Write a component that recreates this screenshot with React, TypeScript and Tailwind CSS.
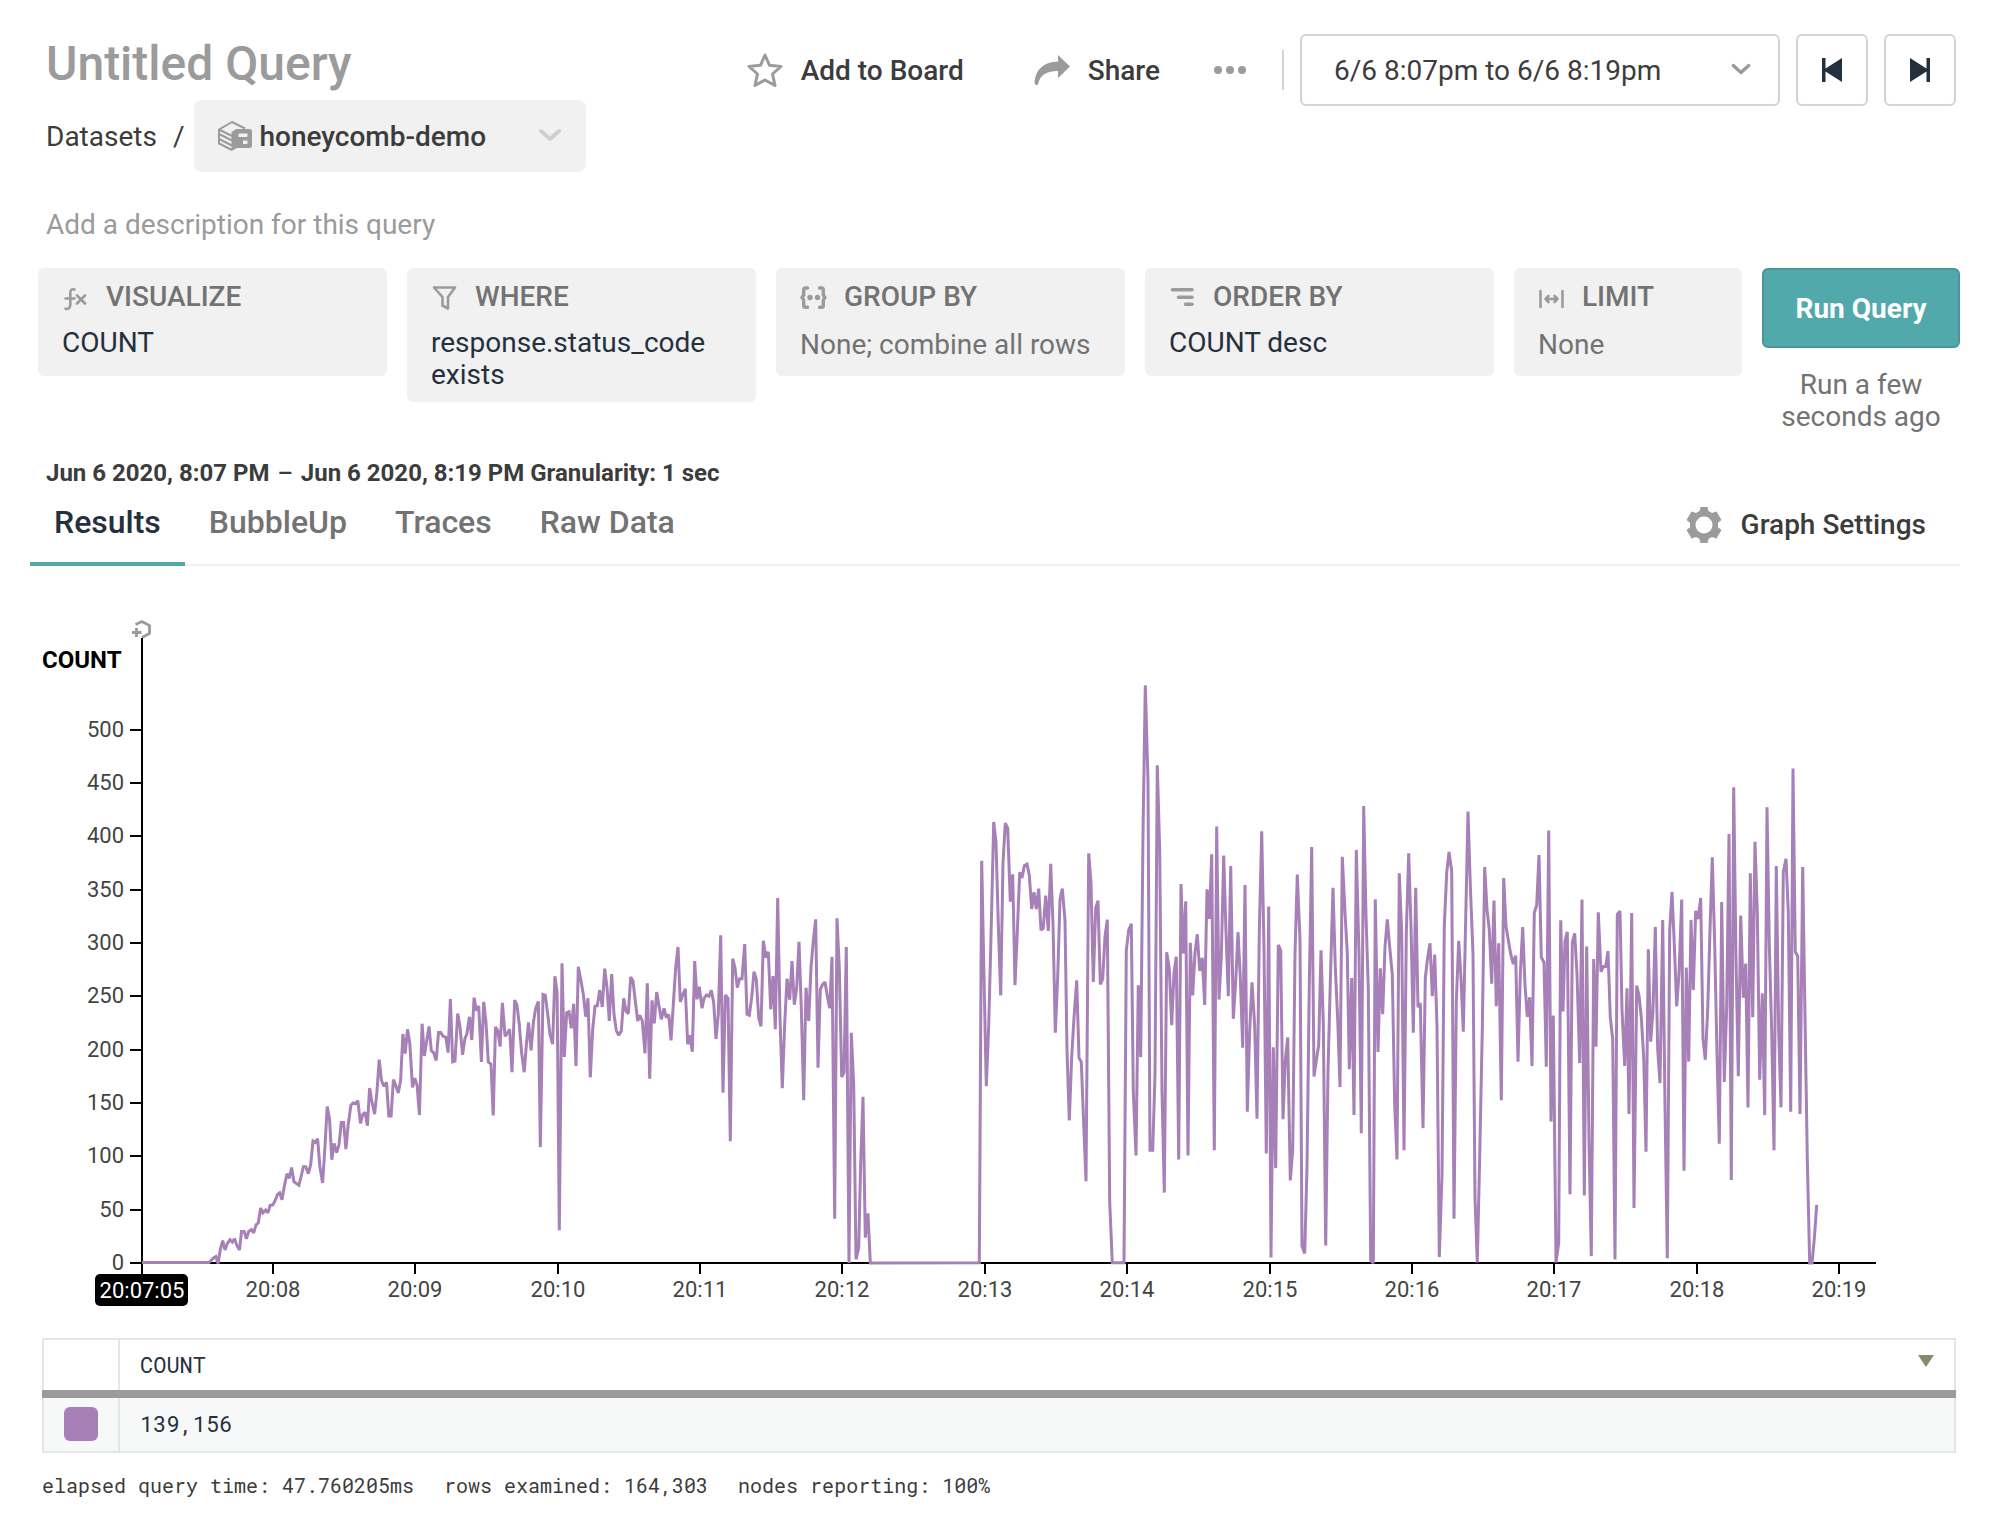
import type { ReactNode } from "react";

type Segment = { x: number; y: number; sx: number; sy: number; points: string };

/* Samples of the COUNT series, one per second. Each segment has its own origin and units per pixel. */
const SEGMENTS: Segment[] = [
  {
    x: 0,
    y: 600,
    sx: 2.6133,
    sy: 2.1479,
    points:
      "371,1421 546,1421 558,1411 564,1408 570,1423 576,1392 582,1374 588,1394 594,1380 601,1372 607,1377 613,1370 619,1384 626,1394 631,1354 638,1354 644,1370 650,1354 657,1350 663,1357 669,1340 675,1336 681,1304 687,1314 694,1308 700,1314 706,1298 713,1297 719,1288 725,1275 731,1271 737,1286 743,1257 750,1230 756,1240 762,1217 768,1247 781,1255 787,1235 793,1215 799,1215 806,1230 812,1210 818,1160 824,1163 830,1155 836,1215 843,1250 849,1175 855,1086 861,1112 867,1200 873,1165 880,1185 886,1168 892,1120 898,1120 904,1177 910,1125 917,1083 923,1078 929,1080 935,1073 942,1122 948,1103 954,1098 960,1127 966,1046 972,1075 979,1102 985,1055 991,985 997,1030 1003,1042 1010,1034 1016,1106 1022,1106 1028,1028 1034,1040 1041,1057 1047,1030 1053,930 1059,972 1065,920 1071,950 1078,1045 1084,1025 1090,1040 1096,1104 1103,908 1109,977 1115,945 1121,914 1127,966 1133,970 1140,987 1146,927 1152,927 1158,935 1165,937 1171,970 1177,855 1183,990 1189,988 1196,886 1202,915 1209,975 1215,940 1220,930 1227,893 1233,943 1239,852 1245,880 1251,870 1258,990 1264,861 1270,905 1276,990 1283,995 1289,1105 1295,915 1301,923 1307,957 1313,863 1320,935 1326,928 1332,920 1338,1012 1345,857 1351,868 1357,910 1363,970 1370,1012 1376,950 1381,905 1388,965 1394,905 1400,875 1407,860 1412,1173 1419,845 1425,847 1431,885 1437,930 1444,952 1450,806 1456,840",
  },
  {
    x: 550,
    y: 800,
    sx: 3,
    sy: 3,
    points:
      "28,1288 36,487 43,768 50,635 57,632 64,682 71,608 78,795 85,497 93,540 100,580 107,647 114,592 121,829 128,685 135,616 142,614 149,567 157,618 164,503 171,560 178,660 185,519 192,640 199,688 206,703 214,690 221,592 228,630 235,638 242,528 249,540 256,600 263,660 270,643 277,660 285,757 292,547 299,833 306,598 313,667 320,573 327,615 334,655 342,622 349,650 356,640 363,718 370,610 377,500 384,438 391,603 399,580 406,563 413,730 420,703 427,752 434,480 441,595 448,557 456,622 463,590 470,582 477,586 484,568 491,605 498,714 505,640 512,403 519,875 526,582 534,592 541,1021 548,473 555,500 562,560 569,533 576,533 584,429 591,640 598,643 605,590 612,512 619,535 626,650 633,676 640,419 648,470 655,452 662,625 669,525 676,685 683,291 690,650 697,862 704,670 711,533 719,596 726,480 733,611 740,560 747,422 754,620 761,898 768,560 776,660 783,500 790,420 797,355 804,800 811,565 818,550 825,543 832,585 839,622 846,467 854,1253 861,352 868,500 875,828 882,815 889,438 897,1386 904,695 911,850 918,1375 926,1340 932,1085 939,887 946,1310 954,1237 961,1386",
  },
  {
    x: 960,
    y: 670,
    sx: 3,
    sy: 2.45,
    points:
      "58,1450 65,465 72,750 79,1017 86,870 93,650 101,370 108,420 115,620 122,795 129,470 136,373 143,385 151,565 158,498 165,770 172,640 179,493 186,507 193,477 201,473 208,500 215,583 222,542 229,583 236,533 243,635 250,630 257,550 265,637 272,472 279,620 286,886 293,750 300,560 307,533 315,610 321,930 328,1101 335,945 342,850 350,758 357,948 364,958 371,1110 378,1250 386,447 393,520 400,762 407,580 414,563 421,768 428,755 435,650 442,609 449,1300 457,1450 492,1450 499,685 506,635 514,619 520,1030 528,1187 535,770 542,946 549,400 556,35 564,270 570,1174 578,1174 585,990 592,231 599,440 606,1030 613,1278 620,689 628,730 635,868 642,740 649,700 656,1197 663,522 670,692 677,564 684,1187 691,666 698,795 705,690 712,645 719,735 727,703 734,818 741,535 748,607 755,449 763,1174 770,381 777,805 784,700 791,452 798,640 805,797 812,478 820,852 827,760 834,640 841,750 848,923 855,524 862,1080 869,880 876,763 884,870 891,1097 898,640 905,393 912,680 919,1182 926,577 933,1437 940,922 947,1218 955,671",
  },
  {
    x: 1240,
    y: 760,
    sx: 3,
    sy: 2.9037,
    points:
      "122,550 129,1040 136,870 143,803 151,1218 158,1130 165,560 172,330 180,520 186,1408 194,1430 201,1180 208,650 215,250 222,916 229,870 236,825 243,550 250,760 257,1407 264,900 272,600 279,368 286,600 293,750 300,947 307,278 315,440 322,560 328,895 335,630 342,1028 349,258 357,560 364,1081 371,131 378,450 385,660 392,1450 400,1458 406,402 414,845 421,602 428,735 435,540 442,460 449,540 457,620 464,1000 471,1157 478,326 485,500 492,1130 499,500 506,268 513,480 520,789 527,368 534,715 541,703 549,1066 556,630 563,570 570,529 577,683 584,562 591,770 598,1440 606,1200 613,480 620,325 627,264 635,320 642,1329 649,700 656,522 663,630 670,786 677,460 684,147 691,360 699,560 705,1270 712,1456 719,1150 727,780 734,308 741,430 748,490 755,647 762,405 769,712 776,529 784,985 791,340 798,480 805,520 812,560 820,590 827,565 834,873 841,620 848,482 855,650 862,743 869,686 876,886 883,440 890,420 897,273 904,570 912,585 919,888 926,202 933,1047",
  },
  {
    x: 1540,
    y: 740,
    sx: 3,
    sy: 2.7509,
    points:
      "40,755 48,1435 56,1380 62,493 69,744 75,550 82,525 90,1247 97,555 104,529 111,640 119,886 126,436 133,1250 140,565 147,1100 154,1417 161,600 168,841 175,471 183,635 190,620 197,620 204,578 211,760 218,820 225,1426 232,477 240,468 246,740 254,894 261,680 267,1026 275,473 282,1285 290,673 297,700 304,760 311,870 318,1130 325,573 332,827 339,740 346,512 353,850 360,941 368,492 375,1000 382,1423 389,520 396,415 403,560 410,730 417,640 425,436 432,1182 439,623 446,882 453,492 460,685 467,467 474,490 482,432 489,820 496,877 503,740 510,520 517,320 524,560 531,860 538,1108 545,443 553,938 560,730 567,256 574,1208 581,127 588,600 595,922 602,480 610,706 617,612 624,1008 631,364 638,760 645,277 652,470 659,932 667,694 674,1029 681,182 688,560 695,800 702,1126 709,344 716,800 723,1008 730,360 738,324 745,470 752,1020 759,76 766,580 773,592 780,1026 788,347 795,760 802,1150 809,1436 816,1436 823,1370 830,1276",
  },
];

const SERIES = SEGMENTS.flatMap((s) =>
  s.points.split(" ").map((p) => {
    const [px, py] = p.split(",").map(Number);
    return `${(s.x + px / s.sx).toFixed(1)},${(s.y + py / s.sy).toFixed(1)}`;
  }),
).join(" ");

const Y_TICKS = [0, 50, 100, 150, 200, 250, 300, 350, 400, 450, 500];
const X_TICKS = ["20:08", "20:09", "20:10", "20:11", "20:12", "20:13", "20:14", "20:15", "20:16", "20:17", "20:18", "20:19"];

function Chart() {
  return (
    <svg viewBox="30 565 1930 772" className="block h-auto w-full" role="img" aria-label="COUNT over time">
      <g fill="none" stroke="#9b9b9b" strokeWidth="2.800">
        <path d="M135.500 623.500L142 620.500L149.500 624.500V632.500L142 636.500" />
        <path d="M132 631.500H141.500M136.500 627V636" />
      </g>
      <text x="42" y="667" className="fill-black text-[24px] font-bold">
        COUNT
      </text>
      <g stroke="#000" strokeWidth="2">
        <path d="M142 637V1275M130 1262H1876" />
        {Y_TICKS.map((v) => (
          <path key={v} d={`M130 ${Math.round(1262 - v * 1.067)}H142`} />
        ))}
        {X_TICKS.map((t, i) => (
          <path key={t} d={`M${Math.round(273 + i * 142.36)} 1262V1273`} />
        ))}
      </g>
      {Y_TICKS.map((v) => (
        <text key={v} x="124" y={Math.round(1269 - v * 1.067)} textAnchor="end" className="fill-[#444] text-[22px]">
          {v}
        </text>
      ))}
      {X_TICKS.map((t, i) => (
        <text key={t} x={Math.round(273 + i * 142.36)} y="1296" textAnchor="middle" className="fill-[#444] text-[22px]">
          {t}
        </text>
      ))}
      <polyline points={SERIES} fill="none" stroke="#a680b7" strokeWidth="3" strokeMiterlimit="2" />
      <rect x="95" y="1273" width="93" height="32" rx="5" fill="#000" />
      <text x="142" y="1297" textAnchor="middle" className="fill-white text-[22px]">
        20:07:05
      </text>
    </svg>
  );
}

function Chevron({ className }: { className: string }) {
  return (
    <svg viewBox="0 0 24 14" fill="none" stroke="currentColor" strokeWidth="4" strokeLinecap="round" strokeLinejoin="round" className={className}>
      <path d="M3 3L12 11L21 3" />
    </svg>
  );
}

function DatasetIcon({ className }: { className: string }) {
  return (
    <svg viewBox="0 0 34 30" className={className}>
      <g fill="none" stroke="#9b9b9b" strokeWidth="2" strokeLinejoin="round">
        <path d="M27 7.500L14 1L1 8.500V22.500L14 29" />
        <path d="M1 8.500L14 15M1 13L14 19.500M1 18L14 24.500" />
      </g>
      <path
        fill="#9b9b9b"
        fillRule="evenodd"
        d="M13.500 30V11L18 8H31.500Q34 8 34 10.500V24.500Q34 27 31.500 27H19ZM21.500 12.500Q20.500 12.500 20.500 13.500V16H28.500Q29.500 16 29.500 15V12.500ZM25 19.500V23H28.500Q29.500 23 29.500 22V19.500Z"
      />
    </svg>
  );
}

function BoxIcon({ children }: { children: ReactNode }) {
  return (
    <svg viewBox="0 0 32 32" className="size-8" fill="none" stroke="#9b9b9b" strokeWidth="2.6" strokeLinecap="round" strokeLinejoin="round">
      {children}
    </svg>
  );
}

function QueryBox({ icon, label, value, muted, className }: { icon: ReactNode; label: string; value: string; muted?: boolean; className: string }) {
  return (
    <button type="button" className={`flex min-h-[108px] flex-col rounded-md bg-[#f1f1f1] px-6 pt-[13px] pb-[11px] text-left ${className}`}>
      <span className="flex items-center gap-3 font-medium text-[#737373]">
        <BoxIcon>{icon}</BoxIcon>
        {label}
      </span>
      <span className={muted ? "mt-4 text-[#737373]" : "mt-[14px] text-[#25303e]"}>{value}</span>
    </button>
  );
}

function Tab({ label, active }: { label: string; active?: boolean }) {
  return (
    <button
      type="button"
      role="tab"
      aria-selected={!!active}
      className={`-mb-[2px] border-b-4 px-6 pt-4 pb-[22px] text-[32px] leading-9 font-medium ${active ? "border-[#51a9ab] text-[#25303e]" : "border-transparent text-[#737373]"}`}
    >
      {label}
    </button>
  );
}

export default function App() {
  return (
    <main className="min-h-screen bg-white pt-[34px] pr-[46px] pl-[30px] font-['Roboto',sans-serif] text-[28px] leading-8 text-[#3c3c3c]">
      <header className="flex items-start justify-between pr-1 pl-4">
        <div>
          <h1 className="text-[48px] leading-[60px] font-medium text-[#9b9b9b]">Untitled Query</h1>
          <nav aria-label="Breadcrumb" className="mt-[6px] flex items-center">
            <a href="#datasets" className="pt-[2px]">
              Datasets
            </a>
            <span className="mr-[10px] ml-4 pt-[2px]">/</span>
            <div className="relative">
              <DatasetIcon className="pointer-events-none absolute top-[21px] left-6 h-[30px] w-[34px]" />
              <select aria-label="Dataset" className="h-[72px] w-[392px] appearance-none rounded-lg bg-[#f1f1f1] pt-[2px] pl-[65px] font-medium">
                <option>honeycomb-demo</option>
              </select>
              <Chevron className="pointer-events-none absolute top-7 right-6 h-[14px] w-6 text-[#cfcfcf]" />
            </div>
          </nav>
        </div>
        <div className="flex items-center">
          <button type="button" className="flex items-center gap-[18px] pt-[2px] font-medium">
            <svg viewBox="0 0 36 36" className="size-9" fill="none" stroke="#9b9b9b" strokeWidth="3" strokeLinejoin="round">
              <path d="M18 2L22.500 12.300L34 13.500L25.500 21L28 32.500L18 27L8 32.500L10.500 21L2 13.500L13.500 12.300Z" />
            </svg>
            Add to Board
          </button>
          <button type="button" className="ml-[70px] flex items-center gap-[18px] pt-[2px] font-medium">
            <svg viewBox="0 0 36 36" className="size-9" fill="#9b9b9b">
              <path d="M24 2L36 13.500L24 25V18C13 18 6 22 4.500 30Q4.300 32 2.400 32Q.5 32 .5 29.500C1.500 16 10 9 24 8.500Z" />
            </svg>
            Share
          </button>
          <button type="button" aria-label="More" className="ml-[53px]">
            <svg viewBox="0 0 34 10" className="h-[10px] w-[34px]" fill="#9b9b9b">
              <circle cx="5" cy="5" r="4" />
              <circle cx="17" cy="5" r="4" />
              <circle cx="29" cy="5" r="4" />
            </svg>
          </button>
          <span className="mx-4 ml-[35px] h-10 w-[2px] bg-[#d4d4d4]" />
          <div className="relative">
            <select aria-label="Time range" className="h-[72px] w-[480px] appearance-none rounded-md border-2 border-[#d4d4d4] bg-white pt-[2px] pl-8">
              <option>6/6 8:07pm to 6/6 8:19pm</option>
            </select>
            <Chevron className="pointer-events-none absolute top-[29px] right-7 h-3 w-[22px] text-[#9b9b9b]" />
          </div>
          <button type="button" aria-label="Previous time range" className="ml-4 flex size-[72px] items-center justify-center rounded-md border-2 border-[#d4d4d4]">
            <svg viewBox="0 0 24 24" className="size-6" fill="#25303e">
              <path d="M2 0H5.500V10.500L22 0V24L5.500 13.500V24H2Z" />
            </svg>
          </button>
          <button type="button" aria-label="Next time range" className="ml-4 flex size-[72px] items-center justify-center rounded-md border-2 border-[#d4d4d4]">
            <svg viewBox="0 0 24 24" className="size-6" fill="#25303e">
              <path d="M22 0H18.500V10.500L2 0V24L18.500 13.500V24H22Z" />
            </svg>
          </button>
        </div>
      </header>

      <input
        aria-label="Query description"
        placeholder="Add a description for this query"
        className="mt-[37px] ml-4 block h-8 w-[600px] outline-none placeholder:text-[#9b9b9b] placeholder:opacity-100"
      />

      <section aria-label="Query builder" className="mt-[27px] flex items-start gap-5 pl-2">
        <QueryBox
          className="min-w-0 flex-1"
          label="VISUALIZE"
          value="COUNT"
          icon={
            <>
              <path d="M12.500 8.500C9.500 7.500 8.500 9 8.300 12V23.500C8.300 27.500 6.500 28.300 3.500 27.700M3.500 17.500H12.500" />
              <path d="M15 14.500L23 22.500M23 14.500L15 22.500" />
            </>
          }
        />
        <QueryBox
          className="min-w-0 flex-1"
          label="WHERE"
          value="response.status_code exists"
          icon={<path d="M3 6.500H24L17 16V27.500L11.500 24.500V16Z" />}
        />
        <QueryBox
          className="min-w-0 flex-1"
          label="GROUP BY"
          value="None; combine all rows"
          muted
          icon={
            <>
              <path
                strokeWidth="3.400"
                d="M7.500 7H5.500Q3.700 7 3.700 9V14L2 16.500L3.700 19V24.500Q3.700 26.300 5.500 26.300H7.500M19.500 7H21.500Q23.300 7 23.300 9V14L25 16.500L23.300 19V24.500Q23.300 26.300 21.500 26.300H19.500"
              />
              <circle cx="10" cy="16.500" r="2.700" fill="#9b9b9b" stroke="none" />
              <circle cx="17.500" cy="16.500" r="2.700" fill="#9b9b9b" stroke="none" />
            </>
          }
        />
        <QueryBox
          className="min-w-0 flex-1"
          label="ORDER BY"
          value="COUNT desc"
          icon={<path strokeWidth="3.600" d="M3.500 8.800H23M9.500 16.300H23M16.500 23.300H23" />}
        />
        <QueryBox
          className="w-[228px]"
          label="LIMIT"
          value="None"
          muted
          icon={<path d="M2.500 10V26M24.500 10V26M7.500 18H19.500M10.500 15L7.500 18L10.500 21M16.500 15L19.500 18L16.500 21" />}
        />
        <div className="w-[198px] text-center">
          <button type="button" className="h-20 w-full rounded-md border-2 border-[#489697] bg-[#51a9ab] pt-[2px] font-bold text-white">
            Run Query
          </button>
          <p className="mt-[21px] px-3 text-[#737373]">Run a few seconds ago</p>
        </div>
      </section>

      <p className="mt-[26px] pl-4 text-[24px] leading-[29px] font-bold">
        Jun 6 2020, 8:07 PM <span className="mx-[2px] font-medium">–</span> Jun 6 2020, 8:19 PM Granularity: 1 sec
      </p>

      <div className="flex items-start justify-between border-b-2 border-[#f1f1f1]">
        <div role="tablist" className="flex">
          <Tab label="Results" active />
          <Tab label="BubbleUp" />
          <Tab label="Traces" />
          <Tab label="Raw Data" />
        </div>
        <button type="button" className="mt-[19px] mr-[34px] flex items-center gap-[19px] font-medium">
          <svg viewBox="0 0 36 36" className="size-9" fill="#9b9b9b">
            <path
              fillRule="evenodd"
              d="M14.500 0H21.500L22.500 4L26 6L30.500 4.500L35.500 13L32 15.800V20.200L35.500 23L30.500 31.500L26 30L22.500 32L21.500 36H14.500L13.500 32L10 30L5.500 31.500L.5 23L4 20.200V15.800L.5 13L5.500 4.500L10 6L13.500 4ZM18 9.500A8.500 8.500 0 1 0 18 26.500A8.500 8.500 0 1 0 18 9.500Z"
            />
          </svg>
          Graph Settings
        </button>
      </div>

      <Chart />

      <div className="pr-1 pl-3 font-['Roboto_Mono','Liberation_Mono',monospace]">
        <table className="w-full border-collapse border-2 border-[#e4e6e6] text-left text-[22px] text-[#25303e]">
          <thead>
            <tr className="h-[55px] border-b-8 border-[#9b9b9b]">
              <th aria-label="Series colour" className="w-[76px] border-r-2 border-r-[#e4e6e6]" />
              <th className="pl-5 font-normal">
                <div className="flex items-center justify-between pr-5">
                  COUNT
                  <svg viewBox="0 0 16 12" className="mb-2 h-3 w-4" fill="#89896b">
                    <path d="M0 0H16L8 12Z" />
                  </svg>
                </div>
              </th>
            </tr>
          </thead>
          <tbody>
            <tr className="h-[58px] bg-[#f7f9f8]">
              <td className="border-r-2 border-r-[#e4e6e6] pb-[2px]">
                <div className="mx-auto size-[34px] rounded-md bg-[#a680b7]" />
              </td>
              <td className="pb-[2px] pl-5">139,156</td>
            </tr>
          </tbody>
        </table>
        <footer className="mt-4 flex gap-[30px] pb-7 text-[20px]">
          <span>elapsed query time: 47.760205ms</span>
          <span>rows examined: 164,303</span>
          <span>nodes reporting: 100%</span>
        </footer>
      </div>
    </main>
  );
}
